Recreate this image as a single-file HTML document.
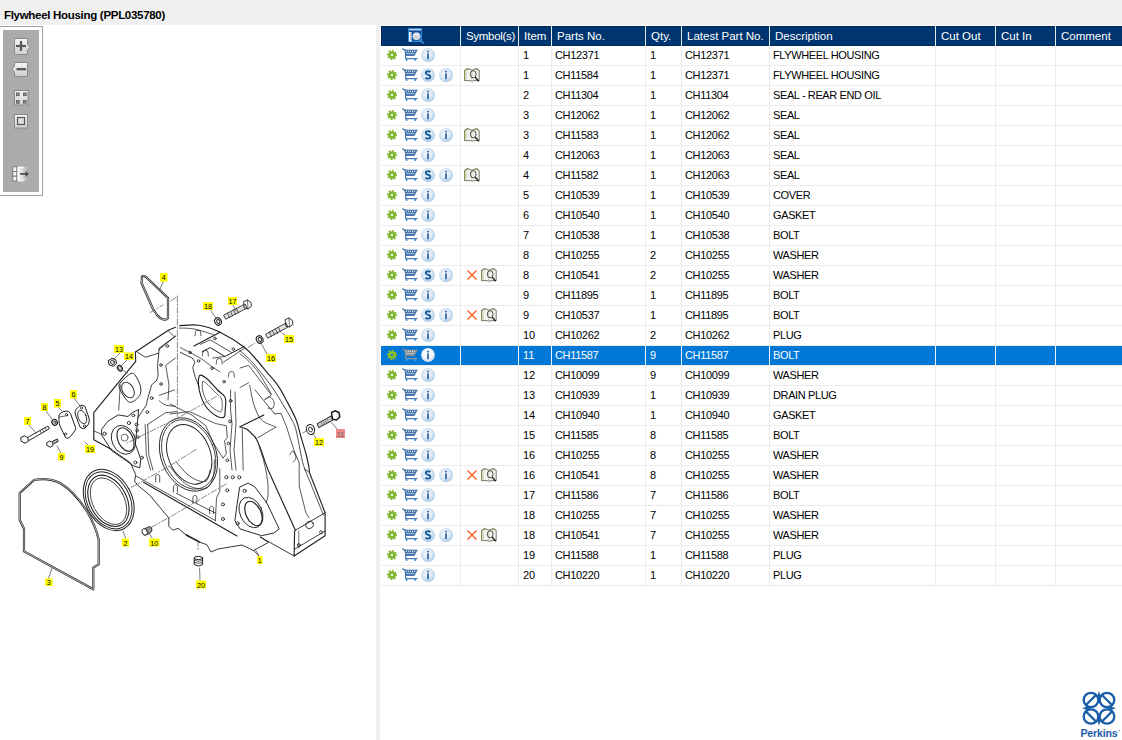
<!DOCTYPE html>
<html><head><meta charset="utf-8">
<style>
*{margin:0;padding:0;box-sizing:border-box}
html,body{width:1122px;height:740px;overflow:hidden;background:#f0f0f0;font-family:"Liberation Sans",sans-serif;position:relative}
.a{position:absolute}
.ic{position:absolute;overflow:visible}
.t{position:absolute;font-size:11px;line-height:20px;white-space:nowrap;color:#000;letter-spacing:-0.1px}
.h{position:absolute;font-size:11.5px;line-height:20px;white-space:nowrap;color:#fff;letter-spacing:0px}
</style></head><body>

<svg width="0" height="0" style="position:absolute">
<defs>
<radialGradient id="gcirc" cx="0.45" cy="0.42" r="0.6">
<stop offset="0" stop-color="#f6f9fc"/><stop offset="0.55" stop-color="#dde9f4"/><stop offset="0.85" stop-color="#b9d3ea"/><stop offset="1" stop-color="#9dc2e2"/>
</radialGradient>
<radialGradient id="gcircs" cx="0.45" cy="0.42" r="0.6">
<stop offset="0" stop-color="#ffffff"/><stop offset="0.6" stop-color="#eef4fa"/><stop offset="0.9" stop-color="#cfe0f0"/><stop offset="1" stop-color="#b8d2ea"/>
</radialGradient>
<symbol id="gear" viewBox="0 0 10 10">
<circle cx="5" cy="5" r="3.6" fill="#7cb42c"/>
<circle cx="5" cy="5" r="4.1" fill="none" stroke="#7cb42c" stroke-width="1.7" stroke-dasharray="1.95,1.27" transform="rotate(-10 5 5)"/>
<circle cx="5" cy="5" r="1.15" fill="#fff"/>
</symbol>
<symbol id="gears" viewBox="0 0 10 10">
<circle cx="5" cy="5" r="3.6" fill="#8ec21e"/>
<circle cx="5" cy="5" r="4.1" fill="none" stroke="#8ec21e" stroke-width="1.7" stroke-dasharray="1.95,1.27" transform="rotate(-10 5 5)"/>
<circle cx="5" cy="5" r="1.15" fill="#0078d7"/>
</symbol>
<symbol id="cart" viewBox="0 0 16 13">
<path fill="none" stroke="#4a77ad" stroke-width="1.3" stroke-linecap="round" d="M0.7,0.8 L2.8,2.3"/>
<path fill="#4a77ad" d="M2.4,1.5 L15.8,1.7 L12.3,7.9 L3.2,7.9 Z"/>
<path fill="#fff" d="M4,2.7h1v1h-1zM6,2.7h1v1h-1zM8,2.7h1v1h-1zM10,2.7h1v1h-1zM12,2.7h1v1h-1zM4.6,5h1v1.1h-1zM6.6,5h1v1.1h-1zM8.6,5h1v1.1h-1zM10.6,5h1v1.1h-1z"/>
<path fill="none" stroke="#4a77ad" stroke-width="1.2" d="M3.6,7.6 V10.6 H15.5"/>
<circle cx="4.6" cy="12" r="1" fill="#3a8ad8"/><circle cx="13.2" cy="12" r="1" fill="#3a8ad8"/>
</symbol>
<symbol id="carts" viewBox="0 0 16 13">
<path fill="none" stroke="#8a9098" stroke-width="1.3" stroke-linecap="round" d="M0.7,0.8 L2.8,2.3"/>
<path fill="#8a9098" d="M2.4,1.5 L15.8,1.7 L12.3,7.9 L3.2,7.9 Z"/>
<path fill="#e8eef4" d="M4,2.7h1v1h-1zM6,2.7h1v1h-1zM8,2.7h1v1h-1zM10,2.7h1v1h-1zM12,2.7h1v1h-1zM4.6,5h1v1.1h-1zM6.6,5h1v1.1h-1zM8.6,5h1v1.1h-1zM10.6,5h1v1.1h-1z"/>
<path fill="none" stroke="#8a9098" stroke-width="1.2" d="M3.6,7.6 V10.6 H15.5"/>
<circle cx="4.6" cy="12" r="1" fill="#3aa0e8"/><circle cx="13.2" cy="12" r="1" fill="#3aa0e8"/>
</symbol>
<symbol id="iic" viewBox="0 0 14 14">
<circle cx="7" cy="7" r="6.9" fill="url(#gcirc)"/>
<rect x="6.1" y="2.8" width="1.8" height="1.6" fill="#3466a6"/>
<rect x="6.1" y="5.4" width="1.8" height="5.8" fill="#3466a6"/>
</symbol>
<symbol id="iics" viewBox="0 0 14 14">
<circle cx="7" cy="7" r="6.9" fill="url(#gcircs)"/>
<rect x="6.1" y="2.8" width="1.8" height="1.6" fill="#3466a6"/>
<rect x="6.1" y="5.4" width="1.8" height="5.8" fill="#3466a6"/>
</symbol>
<symbol id="sic" viewBox="0 0 14 14">
<circle cx="7" cy="7" r="6.9" fill="url(#gcirc)"/>
<path fill="none" stroke="#1a5e9e" stroke-width="1.9" d="M9.4,4.1 Q8.6,3.3 7,3.3 Q4.7,3.3 4.7,5 Q4.7,6.3 7,6.8 Q9.3,7.3 9.3,8.8 Q9.3,10.6 7,10.6 Q5.3,10.6 4.5,9.6"/>
</symbol>
<symbol id="xic" viewBox="0 0 10 10">
<path stroke="#ff5a1a" stroke-width="1.4" d="M0.5,0.5 L9.5,9.5 M9.5,0.5 L0.5,9.5"/>
</symbol>
<symbol id="book" viewBox="0 0 16 14">
<path fill="#f2f2ee" stroke="#5a5a48" stroke-width="0.8" d="M0.6,2.2 L2,2 V1 H5 L8,2.2 L11,1 H13.8 V2 L15.2,2.2 V12.6 H10 Q8,13.8 6,12.6 H0.6 Z"/>
<path fill="none" stroke="#8c8c3c" stroke-width="0.9" d="M0.6,2.2 V12.6 M2.2,1 H5 M11,1 H13.8"/>
<path fill="none" stroke="#b0b0a0" stroke-width="0.6" d="M7.8,2.4 V12.6 M2.2,2.4 V11.6"/>
<ellipse cx="9.2" cy="6.2" rx="2.9" ry="3.6" fill="none" stroke="#2e2e2e" stroke-width="0.85"/>
<path stroke="#222" stroke-width="1.4" d="M11.2,9.2 L14.8,13.2"/>
</symbol>
<symbol id="hdr" viewBox="0 0 17 16">
<rect x="0.5" y="0.5" width="13" height="13" fill="#0b4c94" stroke="#2a8ad8" stroke-width="1"/>
<rect x="1" y="1.2" width="12" height="1.2" fill="#e6eef6"/>
<rect x="1" y="4" width="2.6" height="9.5" fill="#f4f8fc"/>
<path d="M2.3,5h1v0.8h-1zM2.3,7h1v0.8h-1zM2.3,9h1v0.8h-1zM2.3,11h1v0.8h-1z" fill="#2a5a90"/>
<circle cx="8.5" cy="8.3" r="4.5" fill="#2a78c4"/>
<circle cx="8.5" cy="8.3" r="3.8" fill="#d8dce2"/>
<path d="M6.3,6.5 Q8.5,5.2 10.7,6.5" stroke="#fff" stroke-width="1" fill="none"/>
<path d="M6,9.3 H11" stroke="#b8bcc4" stroke-width="0.6"/>
<path stroke="#3a88d0" stroke-width="1.8" d="M11.6,11.6 L15.6,15.4"/>
</symbol>
</defs></svg>

<div class="a" style="left:4px;top:8px;font-size:11.5px;font-weight:bold;line-height:14px;color:#000;white-space:nowrap;letter-spacing:-0.3px">Flywheel Housing (PPL035780)</div>
<div class="a" style="left:0;top:25px;width:376px;height:715px;background:#fff"></div>
<div class="a" style="left:380px;top:25px;width:742px;height:715px;background:#fff"></div>
<div class="a" style="left:0;top:26px;width:43px;height:170px;border:1px solid #a0a0a0;border-left:none;background:#fff"></div>
<div class="a" style="left:3px;top:30px;width:36px;height:162px;background:#ababab"></div>
<svg class="a" style="left:0;top:0" width="45" height="200">
<defs>
<linearGradient id="tbg" x1="0" y1="0" x2="0" y2="1"><stop offset="0" stop-color="#f6f6f6"/><stop offset="1" stop-color="#cfcfcf"/></linearGradient>
</defs>
<g stroke="#8a8a8a" stroke-width="1" fill="url(#tbg)">
<path d="M14.5,38.5 h13 v6 l2.5,2.8 -2.5,2.8 v4.4 h-13z"/>
<path d="M14.5,62.5 h13 v14 h-13 v-4.6 l-2.5,-2.7 2.5,-2.7z"/>
<rect x="14.5" y="90.5" width="13.5" height="14.5"/>
<rect x="14.5" y="114.5" width="13" height="13.5"/>
</g>
<g fill="#5a5a5a">
<rect x="16" y="44.9" width="10" height="2.2"/><rect x="19.9" y="41" width="2.2" height="10"/>
<rect x="16.5" y="68" width="9.5" height="2.4"/>
<g fill="#8a8a8a" stroke="#5a5a5a" stroke-width="0.8"><rect x="16.4" y="92.9" width="2.8" height="2.8"/><rect x="23.4" y="92.9" width="2.8" height="2.8"/>
<rect x="16.4" y="100.4" width="2.8" height="2.8"/><rect x="23.4" y="100.4" width="2.8" height="2.8"/></g>
</g>
<rect x="17.5" y="117.5" width="7" height="7" fill="#dcdcdc" stroke="#555" stroke-width="1.2"/>
<defs><linearGradient id="arg" x1="0" y1="0" x2="1" y2="0"><stop offset="0" stop-color="#fafafa"/><stop offset="0.5" stop-color="#d8d8d8"/><stop offset="1" stop-color="#ababab"/></linearGradient></defs>
<g stroke="#6a6a6a" stroke-width="0.8" fill="#f4f4f4">
<rect x="12.8" y="166.8" width="4" height="4.6"/><rect x="12.8" y="171.4" width="4" height="4.8"/><rect x="12.8" y="176.2" width="4" height="4.8"/>
</g>
<rect x="17.6" y="166.8" width="10.5" height="14.4" fill="url(#arg)"/>
<path d="M18.2,166.8 V181.2 M18.2,167.2 H24 M18.2,180.8 H24" stroke="#fff" stroke-width="0.9"/>
<path d="M20,173.9 H26.2" stroke="#4a4a4a" stroke-width="1.7"/>
<path d="M25.6,170.9 L28.8,173.9 L25.6,176.9 Z" fill="#4a4a4a"/>
</svg>

<svg class="a" style="left:0;top:0" width="376" height="740" viewBox="0 0 376 740">
<g fill="none" stroke="#202020" stroke-width="0.85" stroke-linejoin="round" stroke-linecap="round">
<path d="M135.4,352.0 L168.4,330.3 L175.4,327.3" stroke-width="1.15" stroke="#202020" />
<path d="M136.5,351.6 L145.4,357.3 L158.4,353.2" stroke-width="0.85" stroke="#202020" />
<path d="M158.4,350.0 L175.5,336.2" stroke-width="0.85" stroke="#202020" />
<path d="M168.1,330.5 L174.6,337.0" stroke-width="0.75" stroke="#202020" />
<path d="M179.5,325.7 C182.7,325.6 192.2,324.1 198.9,325.2 C205.7,326.3 212.4,328.5 220.0,332.2 C227.6,335.9 238.3,342.6 244.3,347.2 C250.3,351.8 252.4,355.3 256.2,359.5 C260.0,363.7 263.4,368.1 267.0,372.4 C270.6,376.7 274.6,380.7 277.8,385.4 C281.1,390.1 283.4,394.7 286.5,400.5 C289.6,406.3 293.8,413.9 296.2,420.0 C298.6,426.1 299.4,431.7 301.0,437.0 C302.6,442.3 304.2,447.3 305.5,452.0 C306.8,456.7 307.8,461.6 308.5,465.0 C309.2,468.4 309.3,471.3 309.5,472.6 L325.1,512.7 L325.1,535.7 L294.1,556 L294.6,531" stroke-width="1.15" stroke="#202020" />
<path d="M135.4,352.0 L135.7,361.4 L93.8,412.7 L93.8,439.8 L111.6,449.5" stroke-width="1.15" stroke="#202020" />
<path d="M143.5,482.3 L237.0,536.0" stroke-width="1.15" stroke="#202020" />
<path d="M260.3,537.0 L294.1,556.0" stroke-width="0.90" stroke="#202020" />
<path d="M295.4,530.3 L325.1,512.7" stroke-width="0.90" stroke="#202020" />
<path d="M294.6,549.2 L325.1,531.0" stroke-width="0.85" stroke="#202020" />
<path d="M240.0,426.8 C241.1,427.2 244.5,427.8 246.5,429.0 C248.5,430.2 250.4,432.4 252.0,434.0 C253.6,435.6 254.7,436.0 256.2,438.7 C257.7,441.4 259.6,446.2 261.0,450.0 C262.4,453.8 263.7,458.1 264.9,461.4 C266.1,464.7 267.6,468.6 268.1,470.0 L295.4,530.3" stroke-width="1.15" stroke="#202020" />
<path d="M309.5,472.6 L304.7,468.9 L323.5,515.2" stroke-width="0.75" stroke="#202020" />
<path d="M240.0,426.8 L263.8,414.9" stroke-width="1.15" stroke="#202020" />
<path d="M242.2,429.0 L243.2,470.0" stroke-width="0.75" stroke="#202020" />
<path d="M259.0,446.0 C259.8,448.7 262.6,456.3 264.0,462.0 C265.4,467.7 266.8,474.5 267.5,480.0 C268.2,485.5 268.2,491.2 268.0,495.0 C267.8,498.8 266.3,501.7 266.0,503.0" stroke-width="0.75" stroke="#202020" />
<path d="M257.8,437.6 L275.7,427.3" stroke-width="0.75" stroke="#202020" />
<path d="M240.0,350.8 C241.8,352.4 247.2,356.7 250.8,360.5 C254.4,364.3 258.0,369.0 261.6,373.5 C265.2,378.0 268.8,382.4 272.4,387.6 C276.0,392.8 279.9,399.5 283.2,404.9 C286.4,410.3 289.7,415.6 291.9,420.0 C294.1,424.4 294.6,424.4 296.3,431.1 C298.0,437.8 300.7,453.9 302.2,460.4 C303.7,466.9 304.8,468.5 305.3,470.1" stroke-width="0.80" stroke="#202020" />
<path d="M240.0,354.0 C241.3,355.0 244.5,356.9 247.6,360.0 C250.7,363.1 254.4,366.7 258.4,372.4 C262.4,378.1 269.2,390.4 271.4,394.0" stroke-width="0.75" stroke="#202020" />
<path d="M240.0,368.0 L248.6,365.4 L271.4,395.0 L264.9,399.5" stroke-width="0.75" stroke="#202020" />
<path d="M264.9,399.5 C265.8,399.1 268.5,396.6 270.0,397.0 C271.5,397.4 273.5,400.2 274.0,402.0 C274.5,403.8 274.0,407.0 273.0,408.0 C272.0,409.0 268.8,408.0 268.0,408.0" stroke-width="0.75" stroke="#202020" />
<path d="M274.6,413.8 L281.1,413.3 L286.5,426.8 L294.1,450.6 L299.2,462.8 L299.2,486.0 L305.9,512.7 L308.9,517.6" stroke-width="0.75" stroke="#202020" />
<path d="M240.0,387.6 L248.6,382.7" stroke-width="0.75" stroke="#202020" />
<path d="M249.7,385.4 C250.4,388.6 252.0,399.1 254.0,404.9 C256.0,410.7 258.0,416.4 261.6,420.0 C265.2,423.6 273.4,425.7 275.7,426.8" stroke-width="0.75" stroke="#202020" />
<path d="M255.1,390.0 L274.6,413.8" stroke-width="0.75" stroke="#202020" />
<path d="M289.8,454.9 C290.3,454.2 292.0,450.5 293.0,451.0 C294.0,451.5 296.0,456.2 296.0,458.0 C296.0,459.8 293.5,461.3 293.0,462.0" stroke-width="0.75" stroke="#202020" />
<path d="M179.5,328.1 C181.9,328.2 188.3,327.9 194.0,329.0 C199.7,330.1 210.2,333.7 213.5,334.6" stroke-width="0.75" stroke="#202020" />
<path d="M194.0,346.0 L220.0,332.2" stroke-width="1.15" stroke="#202020" />
<path d="M200.5,344.3 L210.3,339.9 L231.4,352.4" stroke-width="0.75" stroke="#202020" />
<path d="M202.2,351.6 L210.3,347.6 L224.9,356.5 L244.3,346.4" stroke-width="1.00" stroke="#202020" />
<path d="M212.7,358.1 L224.9,356.5" stroke-width="0.75" stroke="#202020" />
<path d="M223.3,362.2 L244.3,348.4" stroke-width="0.75" stroke="#202020" />
<path d="M180.3,347.6 C183.6,349.3 195.0,355.0 200.0,358.0 C205.0,361.0 207.0,363.1 210.3,365.4 C213.6,367.7 218.4,370.9 220.0,372.0" stroke-width="0.75" stroke="#202020" />
<path d="M180.3,352.4 L192.4,358.1 L194.9,362.2 L192.7,367.6 L194.9,376.3 L199.2,387.0" stroke-width="0.85" stroke="#202020" />
<path d="M195.0,335.8 C195.2,335.0 195.2,331.6 196.0,330.8 C196.8,330.0 199.2,330.0 200.0,330.8 C200.8,331.6 200.8,335.0 201.0,335.8" stroke-width="0.75" stroke="#202020" />
<path d="M202.4,356.0 C202.6,355.2 202.6,351.8 203.4,351.0 C204.2,350.2 206.6,350.2 207.4,351.0 C208.2,351.8 208.2,355.2 208.4,356.0" stroke-width="0.75" stroke="#202020" />
<path d="M216.2,364.2 C216.4,363.4 216.4,360.0 217.2,359.2 C218.0,358.4 220.4,358.4 221.2,359.2 C222.0,360.0 222.0,363.4 222.2,364.2" stroke-width="0.75" stroke="#202020" />
<path d="M228.4,377.2 C228.6,376.4 228.6,373.0 229.4,372.2 C230.2,371.4 232.6,371.4 233.4,372.2 C234.2,373.0 234.2,376.4 234.4,377.2" stroke-width="0.75" stroke="#202020" />
<path d="M175.4,336.2 L159.2,348.1 L157.6,365.4 L158.1,376.3 L156.5,380.6 L151.6,384.9 L147.3,400.0 L146.3,405.1 L137.6,418.1" stroke-width="0.85" stroke="#202020" />
<path d="M166.5,364.6 L175.4,358.1" stroke-width="0.75" stroke="#202020" />
<path d="M165.7,365.4 L169.0,385.0 L168.0,400.0" stroke-width="0.75" stroke="#202020" />
<path d="M159.2,395.4 L174.4,390.0" stroke-width="0.75" stroke="#202020" />
<path d="M159.2,400.8 C160.3,401.5 163.0,404.2 165.7,405.1 C168.4,406.0 173.9,406.0 175.5,406.2" stroke-width="0.75" stroke="#202020" />
<path d="M147.3,424.6 L165.7,412.7 L176.5,411.6" stroke-width="0.75" stroke="#202020" />
<path d="M145.2,424.6 L146.3,454.9 L150.6,470.0" stroke-width="0.75" stroke="#202020" />
<path d="M147.7,424.6 L148.8,454.9 L153.0,470.0" stroke-width="0.75" stroke="#202020" />
<path d="M199.2,376.0 C198.1,378.0 198.1,385.0 199.2,390.0 C200.3,395.0 202.8,401.9 205.7,406.2 C208.6,410.5 213.4,414.2 216.5,416.0 C219.6,417.8 222.7,418.0 224.1,417.0 C225.5,416.0 225.0,413.2 225.2,410.0 C225.4,406.8 226.5,400.9 225.2,397.6 C223.9,394.3 220.8,393.3 217.6,390.0 C214.4,386.7 209.1,380.3 206.0,378.0 C202.9,375.7 200.3,374.0 199.2,376.0Z" stroke-width="1.15" stroke="#202020" />
<path d="M202.5,382.0 C202.0,383.5 202.1,388.5 203.0,392.0 C203.9,395.5 205.8,400.0 208.0,403.0 C210.2,406.0 213.8,408.7 216.0,410.0 C218.2,411.3 220.6,412.8 221.5,411.0 C222.4,409.2 222.6,402.2 221.5,399.0 C220.4,395.8 217.6,394.7 215.0,392.0 C212.4,389.3 208.1,384.7 206.0,383.0 C203.9,381.3 203.0,380.5 202.5,382.0Z" stroke-width="0.70" stroke="#202020" />
<path d="M170.0,404.0 L191.6,414.9 L205.7,425.7 L213.3,443.0 L223.0,458.2 L226.3,453.8 L224.6,440.8 L227.3,437.6 L226.3,425.7 L215.4,423.5 L189.5,411.6 L170.0,414.0" stroke-width="0.75" stroke="#202020" />
<path d="M230.6,390.0 L230.6,410.0 L232.0,424.0 L230.0,450.0 L232.0,470.0" stroke-width="0.75" stroke="#202020" />
<path d="M235.0,392.0 L236.0,424.0 L234.0,450.0 L236.0,470.0" stroke-width="0.75" stroke="#202020" />
<path d="M219.8,468.7 L219.8,491.4 L216.5,497.9 L215.4,520.6" stroke-width="0.75" stroke="#202020" />
<ellipse cx="188.5" cy="454.5" rx="27.5" ry="38" transform="rotate(-22 188.5 454.5)" stroke-width="0.85" stroke="#202020"/>
<ellipse cx="188.7" cy="454.4" rx="25.5" ry="36" transform="rotate(-22 188.7 454.4)" stroke-width="0.75" stroke="#202020"/>
<ellipse cx="189.2" cy="454.3" rx="21" ry="31" transform="rotate(-22 189.2 454.3)" stroke-width="0.95" stroke="#202020"/>
<path d="M94.3,431.1 L101.9,434.4" stroke-width="0.75" stroke="#202020" />
<path d="M101.9,428.9 L107.8,421.4 L118.1,414.9 L127.9,416.5 L132.2,412.7 L138.7,409.5 L135.4,444.1 L140.8,459.2 L139.8,467.9 L133.3,465.7 L122.5,458.2 L111.6,450.6 L101.9,435.4Z" stroke-width="0.95" stroke="#202020" />
<ellipse cx="123.5" cy="439.8" rx="11.5" ry="15" transform="rotate(-25 123.5 439.8)" stroke-width="0.85" stroke="#202020"/>
<ellipse cx="125.5" cy="439.5" rx="7.5" ry="12.5" transform="rotate(-25 125.5 439.5)" stroke-width="1.10" stroke="#202020"/>
<circle cx="124.6" cy="437.6" r="3.5" stroke-width="0.65" stroke="#202020"/>
<path d="M120.7,382.4 C122.6,380.0 128.3,374.6 130.8,373.5 C133.3,372.4 134.1,373.8 135.7,376.0 C137.3,378.2 139.8,383.3 140.5,386.5 C141.2,389.7 141.0,392.8 139.7,395.4 C138.3,398.0 134.6,401.1 132.4,401.9 C130.2,402.7 128.9,402.6 126.8,400.3 C124.6,398.0 120.5,391.1 119.5,388.1 C118.5,385.1 118.8,384.8 120.7,382.4Z" stroke-width="0.95" stroke="#202020" />
<ellipse cx="128" cy="390" rx="5.5" ry="8.5" transform="rotate(-30 128 390)" stroke-width="0.90" stroke="#202020"/>
<path d="M120.3,384.9 L118.7,410.0" stroke-width="0.75" stroke="#202020" />
<path d="M111.9,449.7 L130.3,462.7 L135.7,474.6 L134.6,481.1 L137.9,485.4 L149.8,495.2 L168.8,518.0 L168.8,526.2 L172.9,530.3 L178.0,528.3 L186.3,535.0 L199.6,542.1 L206.8,544.7 L211.0,552.0 L218.0,549.0 L242.0,545.0 L253.5,550.5 L268.4,542.4 L260.3,537.0" stroke-width="0.90" stroke="#202020" />
<path d="M253.5,550.5 L259.0,556.0" stroke-width="0.75" stroke="#202020" />
<path d="M186.3,535.0 L199.6,542.1" stroke-width="1.50" stroke="#202020" />
<path d="M176.5,493.5 L215.4,513.0" stroke-width="0.75" stroke="#202020" />
<path d="M136.0,476.0 L215.4,520.6" stroke-width="0.75" stroke="#202020" />
<path d="M155.7,482.0 L155.7,476.0 L157.7,474.0 L159.7,476.0 L159.7,482.0" stroke-width="0.75" stroke="#202020" />
<path d="M173.4,492.2 L173.4,486.2 L175.4,484.2 L177.4,486.2 L177.4,492.2" stroke-width="0.75" stroke="#202020" />
<path d="M192.9,503.0 L192.9,497.0 L194.9,495.0 L196.9,497.0 L196.9,503.0" stroke-width="0.75" stroke="#202020" />
<path d="M209.6,513.8 L209.6,507.8 L211.6,505.8 L213.6,507.8 L213.6,513.8" stroke-width="0.75" stroke="#202020" />
<path d="M170.0,466.5 C171.7,468.6 176.4,475.6 180.0,479.0 C183.6,482.4 187.1,485.5 191.6,487.0 C196.1,488.5 203.2,489.9 206.8,488.1 C210.4,486.3 212.0,480.9 213.3,476.2 C214.6,471.5 214.2,462.7 214.4,460.0" stroke-width="0.75" stroke="#202020" />
<path d="M176.5,462.2 C178.2,464.2 183.4,470.9 187.0,474.0 C190.6,477.1 194.8,479.5 198.1,480.6 C201.4,481.7 204.8,482.4 206.8,480.6 C208.8,478.8 209.5,471.8 210.0,470.0" stroke-width="0.75" stroke="#202020" />
<path d="M240.0,487.0 L248.1,483.0 L254.9,487.0 L267.0,503.2 L279.2,528.9 L273.8,533.0 L261.6,535.7 L240.0,528.9 L234.9,520.6 L237.0,505.0Z" stroke-width="0.95" stroke="#202020" />
<ellipse cx="251" cy="512.5" rx="11" ry="16" transform="rotate(-25 251 512.5)" stroke-width="0.85" stroke="#202020"/>
<ellipse cx="253.5" cy="513.5" rx="7.5" ry="13" transform="rotate(-25 253.5 513.5)" stroke-width="1.20" stroke="#202020"/>
<path d="M298.8,531.0 L298.8,548.0" stroke-width="0.65" stroke="#202020" />
<ellipse cx="309.6" cy="524.9" rx="4" ry="3.6" transform="rotate(-30 309.6 524.9)" stroke-width="0.85" stroke="#202020"/>
<circle cx="214.9" cy="338.4" r="1.3" stroke-width="0.85" stroke="#202020"/>
<circle cx="233.3" cy="349.2" r="1.3" stroke-width="0.85" stroke="#202020"/>
<circle cx="224" cy="381.7" r="1.3" stroke-width="0.85" stroke="#202020"/>
<circle cx="230.6" cy="400.8" r="1.4" stroke-width="0.85" stroke="#202020"/>
<circle cx="230" cy="421.4" r="1.4" stroke-width="0.85" stroke="#202020"/>
<circle cx="228.4" cy="443.5" r="1.4" stroke-width="0.85" stroke="#202020"/>
<circle cx="227.3" cy="460.3" r="1.4" stroke-width="0.85" stroke="#202020"/>
<circle cx="104.6" cy="433.8" r="1.6" stroke-width="0.85" stroke="#202020"/>
<circle cx="128.9" cy="423" r="1.6" stroke-width="0.85" stroke="#202020"/>
<circle cx="133.3" cy="415.4" r="1.4" stroke-width="0.85" stroke="#202020"/>
<circle cx="136.5" cy="424.6" r="1.4" stroke-width="0.85" stroke="#202020"/>
<circle cx="137.1" cy="430.6" r="1.4" stroke-width="0.85" stroke="#202020"/>
<circle cx="137.6" cy="437.1" r="1.4" stroke-width="0.85" stroke="#202020"/>
<circle cx="141.9" cy="457.6" r="1.5" stroke-width="0.85" stroke="#202020"/>
<circle cx="135.4" cy="462.5" r="1.5" stroke-width="0.85" stroke="#202020"/>
<circle cx="147.3" cy="412.2" r="1.4" stroke-width="0.85" stroke="#202020"/>
<circle cx="151.7" cy="398.1" r="1.4" stroke-width="0.85" stroke="#202020"/>
<circle cx="226.3" cy="477.3" r="1.6" stroke-width="0.85" stroke="#202020"/>
<circle cx="232.7" cy="477.3" r="1.6" stroke-width="0.85" stroke="#202020"/>
<circle cx="239.2" cy="477.3" r="1.6" stroke-width="0.85" stroke="#202020"/>
<circle cx="227.3" cy="490.3" r="1.5" stroke-width="0.85" stroke="#202020"/>
<circle cx="223" cy="504.4" r="1.5" stroke-width="0.85" stroke="#202020"/>
<circle cx="223" cy="519" r="1.5" stroke-width="0.85" stroke="#202020"/>
<circle cx="237.6" cy="523.3" r="1.6" stroke-width="0.85" stroke="#202020"/>
<circle cx="244.6" cy="490.8" r="1.6" stroke-width="0.85" stroke="#202020"/>
<circle cx="298.8" cy="545.1" r="1.5" stroke-width="0.85" stroke="#202020"/>
<circle cx="321.1" cy="532.3" r="1.5" stroke-width="0.85" stroke="#202020"/>
<circle cx="167.3" cy="346" r="1.3" stroke-width="0.85" stroke="#202020"/>
<circle cx="190" cy="352.4" r="1.3" stroke-width="0.85" stroke="#202020"/>
<circle cx="198.5" cy="361" r="1.3" stroke-width="0.85" stroke="#202020"/>
<circle cx="211.9" cy="368.3" r="1.3" stroke-width="0.85" stroke="#202020"/>
<circle cx="161" cy="365" r="1.3" stroke-width="0.85" stroke="#202020"/>
<circle cx="161" cy="384" r="1.3" stroke-width="0.85" stroke="#202020"/>
<!-- part 4 gasket -->
<path d="M142,278 C141,276 144,275.5 146,277 L168,298 L168,318 C166,321 161,320 157,315 L153,309 L141.5,283 Z" stroke-width='2.2' stroke="#202020"/>
<path d="M142,278 C141,276 144,275.5 146,277 L168,298 L168,318 C166,321 161,320 157,315 L153,309 L141.5,283 Z" stroke="#fff" stroke-width='0.7'/>
<!-- part 3 gasket -->
<path d="M19.7,493 L19.7,520 L24,528.7 L24,551.4 L93.3,589.3 L93.3,567.6 L98.7,564.4 L98.7,539.5 C96,528 92,520 88,513 C80,500 72,490 60,483 C52,479 44,478 34,480 Z" stroke-width='2.2' stroke="#202020"/>
<path d="M19.7,493 L19.7,520 L24,528.7 L24,551.4 L93.3,589.3 L93.3,567.6 L98.7,564.4 L98.7,539.5 C96,528 92,520 88,513 C80,500 72,490 60,483 C52,479 44,478 34,480 Z" stroke="#fff" stroke-width='0.7'/>
<!-- part 2 seal -->
<ellipse cx="108.7" cy="500" rx="23" ry="32.5" transform="rotate(-28 108.7 500)" stroke-width="1.00"/>
<ellipse cx="108.6" cy="500.3" rx="21" ry="30.3" transform="rotate(-28 108.6 500.3)" stroke-width="0.95"/>
<ellipse cx="108.4" cy="500.8" rx="18.3" ry="27.3" transform="rotate(-28 108.4 500.8)" stroke-width="1.10"/>
<ellipse cx="108.5" cy="501.2" rx="15.8" ry="25" transform="rotate(-28 108.5 501.2)" stroke-width="0.75"/>
<!-- part 5 cover -->
<path d="M59,415.5 Q60,412.5 63,411.8 L66.5,411 Q69,411 70.5,413.5 L75.5,427.5 Q76,430 74,432 L69.5,437.5 Q67.5,439 65.5,437.5 L60,426 Q58.8,423.5 59,420 Z" stroke-width="1.00"/>
<path d="M59.5,417 L68,415.5" stroke-width="0.70"/>
<circle cx="66.5" cy="414.5" r="1.1" stroke-width="0.75"/><circle cx="65.5" cy="434" r="1.1" stroke-width="0.75"/>
<!-- part 6 gasket -->
<path d="M79.5,406 Q82,404 85,406.5 L89,418 Q90,422 88,425 L85,428 Q82,429.5 80,427 L75.5,415 Q74,411.5 76,409.5 Z" stroke-width="1.00"/>
<ellipse cx="82.2" cy="417" rx="4" ry="7" transform="rotate(-22 82.2 417)" stroke-width="0.85"/>
<circle cx="81.5" cy="408" r="1.1" stroke-width="0.75"/><circle cx="84.5" cy="426" r="1.1" stroke-width="0.75"/>
<!-- bolt 7 -->
<path d="M27.5,437.5 L48,426 L49.3,428.8 L29,440.5" stroke-width="0.95"/>
<path d="M40,430.5 L41.2,433.3 M42.5,429 L43.7,431.8 M45,427.6 L46.2,430.4" stroke-width="0.65"/>
<path d="M21,437.5 L24.5,435.8 L28,437.8 L28.3,441.3 L25,443.2 L21.5,441.5 Z" stroke-width="1.00"/>
<!-- washer 8 -->
<ellipse cx="54.6" cy="422.3" rx="2.6" ry="3" transform="rotate(-30 54.6 422.3)" stroke-width="1.20"/>
<ellipse cx="54.8" cy="422.3" rx="1" ry="1.4" transform="rotate(-30 54.8 422.3)" stroke-width="0.75"/>
<!-- bolt 9 -->
<path d="M52.5,441.5 L57.2,439 L58.3,441.3 L53.5,443.8" stroke-width="0.95"/>
<path d="M54,440.7 L55,443 M55.7,439.8 L56.7,442.1" stroke-width="0.60"/>
<path d="M47,442.5 L49.8,441 L52.8,442.6 L53,445.6 L50.2,447.2 L47.3,445.6 Z" stroke-width="1.00"/>
<!-- 13, 14 -->
<path d="M108.5,360.5 L112,358.3 L115.8,359.8 L116.6,363.5 L113.5,366.3 L109.5,365 Z" fill="#e4e4e4" stroke-width="1.00"/>
<ellipse cx="112.5" cy="362.3" rx="1.8" ry="2.2" transform="rotate(-30 112.5 362.3)" stroke-width="0.85"/>
<ellipse cx="119.9" cy="368.2" rx="2.2" ry="3" transform="rotate(-35 119.9 368.2)" fill="#bbb" stroke-width="1.20"/>
<!-- bolt 17 -->
<path d="M224,315 L245,304 L247,308 L226,319 Z" fill="#e0e0e0"/>
<path d="M227.5,313 L229.5,317.5 M230.5,311.5 L232.5,316 M233.5,310 L235.5,314.5 M236.5,308.5 L238.5,313" stroke-width="0.70"/>
<path d="M244,301.5 L247.5,300 L251,302.5 L251.3,306.5 L248,309 L244.5,308 Z" stroke-width="0.90"/><path d="M247.5,300 L248,309" stroke-width="0.65"/>
<ellipse cx="218" cy="321.5" rx="3.2" ry="3.8" transform="rotate(-30 218 321.5)" stroke-width="1.10"/><ellipse cx="218.3" cy="321.5" rx="1.5" ry="2" transform="rotate(-30 218.3 321.5)" stroke-width="0.95"/>
<!-- bolt 15 -->
<path d="M266,334 L286,323 L288,327 L268,338 Z" fill="#e0e0e0"/>
<path d="M269.5,332 L271.5,336.5 M272.5,330.5 L274.5,335 M275.5,329 L277.5,333.5 M278.5,327.5 L280.5,332" stroke-width="0.70"/>
<path d="M285.5,319.5 L289,318 L292.5,320.5 L292.8,324.5 L289.5,327 L286,326 Z" stroke-width="0.90"/><path d="M289,318 L289.5,327" stroke-width="0.65"/>
<ellipse cx="259.7" cy="339.5" rx="3.2" ry="3.8" transform="rotate(-30 259.7 339.5)" stroke-width="1.10"/><ellipse cx="260" cy="339.5" rx="1.5" ry="2" transform="rotate(-30 260 339.5)" stroke-width="0.95"/>
<!-- bolt 11 -->
<path d="M317.5,423.5 L331,416 L333,420 L319,427.5 Z" fill="#c8c8c8" stroke-width="0.95"/>
<path d="M321,421.5 L322.5,425 M323,420.5 L324.5,424 M325,419.5 L326.5,423 M327,418.5 L328.5,422" stroke-width="0.65" stroke="#666"/>
<path d="M331.5,412.5 L335,410.8 L339,412.5 L339.8,417 L336.5,420 L332.5,419.2 Z" stroke-width="1.50" stroke="#1a1a1a"/>
<ellipse cx="310.5" cy="429.5" rx="4" ry="5" transform="rotate(-20 310.5 429.5)" stroke-width="1.10"/>
<ellipse cx="310.5" cy="429.5" rx="1.8" ry="2.6" transform="rotate(-20 310.5 429.5)"/>
<!-- plug 10 -->
<path d="M145,528.6 L149.5,526.5 Q152,527 152,530 Q151.5,532.5 148.5,534 L145,535.2" fill="#9a9a9a" stroke-width="0.90"/>
<ellipse cx="144.7" cy="531.9" rx="2.6" ry="3.4" transform="rotate(-20 144.7 531.9)" fill="#fff" stroke-width="0.90"/>
<!-- plug 20 -->
<path d="M194.2,558 L194.2,564.5 Q198.4,567.5 202.6,564.5 L202.6,558" stroke-width="1.00"/>
<ellipse cx="198.4" cy="558" rx="4.2" ry="1.6" stroke-width="1.00"/>
<path d="M194.2,560.5 Q198.4,562.3 202.6,560.5 M194.2,562.5 Q198.4,564.3 202.6,562.5" stroke-width="0.75"/>
<!-- leaders -->
<g stroke-width="0.70" stroke="#444">
<path d="M163.5,281 L160,289"/>
<path d="M211,311 L216,318 M233,305 L236,311 M282,333 L285,335 M261,343 L267,354"/>
<path d="M331,422 L338,430 M313,434 L316,438"/>
<path d="M120,353 L114,359 M127,360 L121,366"/>
<path d="M74,398 L80,406 M58,407 L62,411 M46,411 L52,419 M29,425 L36,433 M61,453 L57,446 M88,445 L85,442"/>
<path d="M125.5,538 L123,531 M152,538 L149,533 M259,556 L255,549 M200,580 L199.6,568"/>
<path d="M48.5,578.5 L52,568"/>
</g>
<g stroke-width="0.70" stroke="#555" stroke-dasharray="6,2,1.5,2">
<path d="M177.4,296 L177.4,418"/>
<path d="M150,312.6 L163,305 M171,300.7 L176,297.4"/>
<path d="M248,347.6 L255,343 M303,433 L306,431 M122.5,370 L128,373.5"/>
<path d="M216.5,396.5 L177.6,418.1 L127,443"/>
<path d="M196,449.5 L170,465.7 L127.1,489.8 M226.3,483.8 L173.2,515.2 L150,528"/>
<path d="M198,540 L198,550"/>
</g>

</g>
<!-- labels -->
<g fill="#ffff00">
<rect x="160" y="273" width="7.5" height="8.5"/>
<rect x="228" y="297" width="9" height="8"/>
<rect x="203" y="302" width="10" height="8"/>
<rect x="284" y="335" width="10" height="8"/>
<rect x="266" y="354" width="10" height="8"/>
<rect x="114" y="345" width="10" height="8"/>
<rect x="124" y="352.5" width="10" height="7.5"/>
<rect x="70" y="390" width="7" height="8.5"/>
<rect x="54" y="399" width="7" height="8.5"/>
<rect x="41" y="403" width="7" height="8"/>
<rect x="24" y="417" width="7" height="8"/>
<rect x="85" y="445" width="10" height="8"/>
<rect x="58" y="453" width="7" height="7.5"/>
<rect x="314" y="438" width="10" height="8"/>
<rect x="122" y="538.5" width="7" height="8"/>
<rect x="149" y="538.5" width="10.5" height="8"/>
<rect x="257" y="556" width="5.5" height="8"/>
<rect x="196" y="580.5" width="10" height="8"/>
<rect x="45" y="578.5" width="7.5" height="7.5"/>
</g>
<rect x="336" y="429" width="9" height="9" fill="#f08a8a"/>
<g font-family="Liberation Sans" font-size="7.2" fill="#000" text-anchor="middle">
<text x="163.8" y="280">4</text>
<text x="232.5" y="304">17</text>
<text x="208" y="309">18</text>
<text x="289" y="342">15</text>
<text x="271" y="361">16</text>
<text x="119" y="352">13</text>
<text x="129" y="359">14</text>
<text x="73.5" y="397">6</text>
<text x="57.5" y="406">5</text>
<text x="44.5" y="410">8</text>
<text x="27.5" y="424">7</text>
<text x="90" y="452">19</text>
<text x="61.5" y="459.5">9</text>
<text x="319" y="445">12</text>
<text x="125.5" y="545.5">2</text>
<text x="154.2" y="545.5">10</text>
<text x="259.8" y="563">1</text>
<text x="201" y="587.5">20</text>
<text x="48.7" y="585">3</text>
<text x="340.5" y="436.5" fill="#666">11</text>
</g>
</svg>

<svg class="a" style="left:1075px;top:686px" width="47" height="54" viewBox="1075 686 47 54">
<g fill="none" stroke="#1a5ea8" stroke-width="2.3">
<ellipse cx="1091" cy="700" rx="7.3" ry="7.2"/>
<ellipse cx="1107" cy="700" rx="7.3" ry="7.2"/>
<ellipse cx="1091" cy="716.5" rx="7.3" ry="7.2"/>
<ellipse cx="1107" cy="716.5" rx="7.3" ry="7.2"/>
<path d="M1085.5,705.5 L1096.5,694.5 M1101.5,694.5 L1112.5,705.5 M1085.5,711 L1096.5,722 M1101.5,722 L1112.5,711"/>
</g>
<path d="M1099,691 L1100.8,697 1099,701 1097.2,697Z M1099,715.5 L1100.8,719.5 1099,726 1097.2,719.5Z M1082,708.25 L1087,706.6 1090.5,708.25 1087,709.9Z M1116,708.25 L1111,706.6 1107.5,708.25 1111,709.9Z" fill="#1a5ea8"/>
<text x="1080.5" y="737.3" font-family="Liberation Sans" font-weight="bold" font-size="10.6" fill="#1a5ea8" letter-spacing="-0.2">Perkins</text>
<circle cx="1119.5" cy="730.5" r="0.8" fill="#8aa8cc"/>
</svg>

<div class="a" style="left:381px;top:26px;width:741px;height:20px;background:#003670;border:1px solid #00285a;border-right:none"></div>
<div class="a" style="left:460px;top:26px;width:1px;height:20px;background:#e8e8e8"></div>
<div class="a" style="left:518px;top:26px;width:1px;height:20px;background:#e8e8e8"></div>
<div class="a" style="left:551px;top:26px;width:1px;height:20px;background:#e8e8e8"></div>
<div class="a" style="left:645px;top:26px;width:1px;height:20px;background:#e8e8e8"></div>
<div class="a" style="left:681px;top:26px;width:1px;height:20px;background:#e8e8e8"></div>
<div class="a" style="left:769px;top:26px;width:1px;height:20px;background:#e8e8e8"></div>
<div class="a" style="left:935px;top:26px;width:1px;height:20px;background:#e8e8e8"></div>
<div class="a" style="left:995px;top:26px;width:1px;height:20px;background:#e8e8e8"></div>
<div class="a" style="left:1055px;top:26px;width:1px;height:20px;background:#e8e8e8"></div>
<svg class="ic" style="left:408px;top:28px" width="17" height="16"><use href="#hdr"/></svg>
<div class="h" style="left:466px;top:26px;letter-spacing:-0.3px">Symbol(s)</div>
<div class="h" style="left:524px;top:26px">Item</div>
<div class="h" style="left:557px;top:26px">Parts No.</div>
<div class="h" style="left:651px;top:26px">Qty.</div>
<div class="h" style="left:687px;top:26px">Latest Part No.</div>
<div class="h" style="left:775px;top:26px">Description</div>
<div class="h" style="left:941px;top:26px">Cut Out</div>
<div class="h" style="left:1001px;top:26px">Cut In</div>
<div class="h" style="left:1061px;top:26px">Comment</div>
<div class="a" style="left:381px;top:65px;width:741px;height:1px;background:#ebebeb"></div>
<div class="a" style="left:460px;top:46px;width:1px;height:20px;background:#ebebeb"></div>
<div class="a" style="left:518px;top:46px;width:1px;height:20px;background:#ebebeb"></div>
<div class="a" style="left:551px;top:46px;width:1px;height:20px;background:#ebebeb"></div>
<div class="a" style="left:645px;top:46px;width:1px;height:20px;background:#ebebeb"></div>
<div class="a" style="left:681px;top:46px;width:1px;height:20px;background:#ebebeb"></div>
<div class="a" style="left:769px;top:46px;width:1px;height:20px;background:#ebebeb"></div>
<div class="a" style="left:935px;top:46px;width:1px;height:20px;background:#ebebeb"></div>
<div class="a" style="left:995px;top:46px;width:1px;height:20px;background:#ebebeb"></div>
<div class="a" style="left:1055px;top:46px;width:1px;height:20px;background:#ebebeb"></div>
<svg class="ic" style="left:387px;top:50px" width="10" height="10"><use href="#gear"/></svg>
<svg class="ic" style="left:402px;top:48px" width="16" height="13"><use href="#cart"/></svg>
<svg class="ic" style="left:421px;top:48px" width="14" height="14"><use href="#iic"/></svg>
<div class="t" style="left:523px;top:45px;color:#000">1</div>
<div class="t" style="left:555px;top:45px;color:#000;letter-spacing:-0.32px">CH12371</div>
<div class="t" style="left:650px;top:45px;color:#000">1</div>
<div class="t" style="left:685px;top:45px;color:#000;letter-spacing:-0.32px">CH12371</div>
<div class="t" style="left:773px;top:45px;color:#000;letter-spacing:-0.38px">FLYWHEEL HOUSING</div>
<div class="a" style="left:381px;top:85px;width:741px;height:1px;background:#ebebeb"></div>
<div class="a" style="left:460px;top:66px;width:1px;height:20px;background:#ebebeb"></div>
<div class="a" style="left:518px;top:66px;width:1px;height:20px;background:#ebebeb"></div>
<div class="a" style="left:551px;top:66px;width:1px;height:20px;background:#ebebeb"></div>
<div class="a" style="left:645px;top:66px;width:1px;height:20px;background:#ebebeb"></div>
<div class="a" style="left:681px;top:66px;width:1px;height:20px;background:#ebebeb"></div>
<div class="a" style="left:769px;top:66px;width:1px;height:20px;background:#ebebeb"></div>
<div class="a" style="left:935px;top:66px;width:1px;height:20px;background:#ebebeb"></div>
<div class="a" style="left:995px;top:66px;width:1px;height:20px;background:#ebebeb"></div>
<div class="a" style="left:1055px;top:66px;width:1px;height:20px;background:#ebebeb"></div>
<svg class="ic" style="left:387px;top:70px" width="10" height="10"><use href="#gear"/></svg>
<svg class="ic" style="left:402px;top:68px" width="16" height="13"><use href="#cart"/></svg>
<svg class="ic" style="left:421px;top:68px" width="14" height="14"><use href="#sic"/></svg>
<svg class="ic" style="left:439px;top:68px" width="14" height="14"><use href="#iic"/></svg>
<svg class="ic" style="left:464px;top:68px" width="16" height="14"><use href="#book"/></svg>
<div class="t" style="left:523px;top:65px;color:#000">1</div>
<div class="t" style="left:555px;top:65px;color:#000;letter-spacing:-0.32px">CH11584</div>
<div class="t" style="left:650px;top:65px;color:#000">1</div>
<div class="t" style="left:685px;top:65px;color:#000;letter-spacing:-0.32px">CH12371</div>
<div class="t" style="left:773px;top:65px;color:#000;letter-spacing:-0.38px">FLYWHEEL HOUSING</div>
<div class="a" style="left:381px;top:105px;width:741px;height:1px;background:#ebebeb"></div>
<div class="a" style="left:460px;top:86px;width:1px;height:20px;background:#ebebeb"></div>
<div class="a" style="left:518px;top:86px;width:1px;height:20px;background:#ebebeb"></div>
<div class="a" style="left:551px;top:86px;width:1px;height:20px;background:#ebebeb"></div>
<div class="a" style="left:645px;top:86px;width:1px;height:20px;background:#ebebeb"></div>
<div class="a" style="left:681px;top:86px;width:1px;height:20px;background:#ebebeb"></div>
<div class="a" style="left:769px;top:86px;width:1px;height:20px;background:#ebebeb"></div>
<div class="a" style="left:935px;top:86px;width:1px;height:20px;background:#ebebeb"></div>
<div class="a" style="left:995px;top:86px;width:1px;height:20px;background:#ebebeb"></div>
<div class="a" style="left:1055px;top:86px;width:1px;height:20px;background:#ebebeb"></div>
<svg class="ic" style="left:387px;top:90px" width="10" height="10"><use href="#gear"/></svg>
<svg class="ic" style="left:402px;top:88px" width="16" height="13"><use href="#cart"/></svg>
<svg class="ic" style="left:421px;top:88px" width="14" height="14"><use href="#iic"/></svg>
<div class="t" style="left:523px;top:85px;color:#000">2</div>
<div class="t" style="left:555px;top:85px;color:#000;letter-spacing:-0.32px">CH11304</div>
<div class="t" style="left:650px;top:85px;color:#000">1</div>
<div class="t" style="left:685px;top:85px;color:#000;letter-spacing:-0.32px">CH11304</div>
<div class="t" style="left:773px;top:85px;color:#000;letter-spacing:-0.38px">SEAL - REAR END OIL</div>
<div class="a" style="left:381px;top:125px;width:741px;height:1px;background:#ebebeb"></div>
<div class="a" style="left:460px;top:106px;width:1px;height:20px;background:#ebebeb"></div>
<div class="a" style="left:518px;top:106px;width:1px;height:20px;background:#ebebeb"></div>
<div class="a" style="left:551px;top:106px;width:1px;height:20px;background:#ebebeb"></div>
<div class="a" style="left:645px;top:106px;width:1px;height:20px;background:#ebebeb"></div>
<div class="a" style="left:681px;top:106px;width:1px;height:20px;background:#ebebeb"></div>
<div class="a" style="left:769px;top:106px;width:1px;height:20px;background:#ebebeb"></div>
<div class="a" style="left:935px;top:106px;width:1px;height:20px;background:#ebebeb"></div>
<div class="a" style="left:995px;top:106px;width:1px;height:20px;background:#ebebeb"></div>
<div class="a" style="left:1055px;top:106px;width:1px;height:20px;background:#ebebeb"></div>
<svg class="ic" style="left:387px;top:110px" width="10" height="10"><use href="#gear"/></svg>
<svg class="ic" style="left:402px;top:108px" width="16" height="13"><use href="#cart"/></svg>
<svg class="ic" style="left:421px;top:108px" width="14" height="14"><use href="#iic"/></svg>
<div class="t" style="left:523px;top:105px;color:#000">3</div>
<div class="t" style="left:555px;top:105px;color:#000;letter-spacing:-0.32px">CH12062</div>
<div class="t" style="left:650px;top:105px;color:#000">1</div>
<div class="t" style="left:685px;top:105px;color:#000;letter-spacing:-0.32px">CH12062</div>
<div class="t" style="left:773px;top:105px;color:#000;letter-spacing:-0.38px">SEAL</div>
<div class="a" style="left:381px;top:145px;width:741px;height:1px;background:#ebebeb"></div>
<div class="a" style="left:460px;top:126px;width:1px;height:20px;background:#ebebeb"></div>
<div class="a" style="left:518px;top:126px;width:1px;height:20px;background:#ebebeb"></div>
<div class="a" style="left:551px;top:126px;width:1px;height:20px;background:#ebebeb"></div>
<div class="a" style="left:645px;top:126px;width:1px;height:20px;background:#ebebeb"></div>
<div class="a" style="left:681px;top:126px;width:1px;height:20px;background:#ebebeb"></div>
<div class="a" style="left:769px;top:126px;width:1px;height:20px;background:#ebebeb"></div>
<div class="a" style="left:935px;top:126px;width:1px;height:20px;background:#ebebeb"></div>
<div class="a" style="left:995px;top:126px;width:1px;height:20px;background:#ebebeb"></div>
<div class="a" style="left:1055px;top:126px;width:1px;height:20px;background:#ebebeb"></div>
<svg class="ic" style="left:387px;top:130px" width="10" height="10"><use href="#gear"/></svg>
<svg class="ic" style="left:402px;top:128px" width="16" height="13"><use href="#cart"/></svg>
<svg class="ic" style="left:421px;top:128px" width="14" height="14"><use href="#sic"/></svg>
<svg class="ic" style="left:439px;top:128px" width="14" height="14"><use href="#iic"/></svg>
<svg class="ic" style="left:464px;top:128px" width="16" height="14"><use href="#book"/></svg>
<div class="t" style="left:523px;top:125px;color:#000">3</div>
<div class="t" style="left:555px;top:125px;color:#000;letter-spacing:-0.32px">CH11583</div>
<div class="t" style="left:650px;top:125px;color:#000">1</div>
<div class="t" style="left:685px;top:125px;color:#000;letter-spacing:-0.32px">CH12062</div>
<div class="t" style="left:773px;top:125px;color:#000;letter-spacing:-0.38px">SEAL</div>
<div class="a" style="left:381px;top:165px;width:741px;height:1px;background:#ebebeb"></div>
<div class="a" style="left:460px;top:146px;width:1px;height:20px;background:#ebebeb"></div>
<div class="a" style="left:518px;top:146px;width:1px;height:20px;background:#ebebeb"></div>
<div class="a" style="left:551px;top:146px;width:1px;height:20px;background:#ebebeb"></div>
<div class="a" style="left:645px;top:146px;width:1px;height:20px;background:#ebebeb"></div>
<div class="a" style="left:681px;top:146px;width:1px;height:20px;background:#ebebeb"></div>
<div class="a" style="left:769px;top:146px;width:1px;height:20px;background:#ebebeb"></div>
<div class="a" style="left:935px;top:146px;width:1px;height:20px;background:#ebebeb"></div>
<div class="a" style="left:995px;top:146px;width:1px;height:20px;background:#ebebeb"></div>
<div class="a" style="left:1055px;top:146px;width:1px;height:20px;background:#ebebeb"></div>
<svg class="ic" style="left:387px;top:150px" width="10" height="10"><use href="#gear"/></svg>
<svg class="ic" style="left:402px;top:148px" width="16" height="13"><use href="#cart"/></svg>
<svg class="ic" style="left:421px;top:148px" width="14" height="14"><use href="#iic"/></svg>
<div class="t" style="left:523px;top:145px;color:#000">4</div>
<div class="t" style="left:555px;top:145px;color:#000;letter-spacing:-0.32px">CH12063</div>
<div class="t" style="left:650px;top:145px;color:#000">1</div>
<div class="t" style="left:685px;top:145px;color:#000;letter-spacing:-0.32px">CH12063</div>
<div class="t" style="left:773px;top:145px;color:#000;letter-spacing:-0.38px">SEAL</div>
<div class="a" style="left:381px;top:185px;width:741px;height:1px;background:#ebebeb"></div>
<div class="a" style="left:460px;top:166px;width:1px;height:20px;background:#ebebeb"></div>
<div class="a" style="left:518px;top:166px;width:1px;height:20px;background:#ebebeb"></div>
<div class="a" style="left:551px;top:166px;width:1px;height:20px;background:#ebebeb"></div>
<div class="a" style="left:645px;top:166px;width:1px;height:20px;background:#ebebeb"></div>
<div class="a" style="left:681px;top:166px;width:1px;height:20px;background:#ebebeb"></div>
<div class="a" style="left:769px;top:166px;width:1px;height:20px;background:#ebebeb"></div>
<div class="a" style="left:935px;top:166px;width:1px;height:20px;background:#ebebeb"></div>
<div class="a" style="left:995px;top:166px;width:1px;height:20px;background:#ebebeb"></div>
<div class="a" style="left:1055px;top:166px;width:1px;height:20px;background:#ebebeb"></div>
<svg class="ic" style="left:387px;top:170px" width="10" height="10"><use href="#gear"/></svg>
<svg class="ic" style="left:402px;top:168px" width="16" height="13"><use href="#cart"/></svg>
<svg class="ic" style="left:421px;top:168px" width="14" height="14"><use href="#sic"/></svg>
<svg class="ic" style="left:439px;top:168px" width="14" height="14"><use href="#iic"/></svg>
<svg class="ic" style="left:464px;top:168px" width="16" height="14"><use href="#book"/></svg>
<div class="t" style="left:523px;top:165px;color:#000">4</div>
<div class="t" style="left:555px;top:165px;color:#000;letter-spacing:-0.32px">CH11582</div>
<div class="t" style="left:650px;top:165px;color:#000">1</div>
<div class="t" style="left:685px;top:165px;color:#000;letter-spacing:-0.32px">CH12063</div>
<div class="t" style="left:773px;top:165px;color:#000;letter-spacing:-0.38px">SEAL</div>
<div class="a" style="left:381px;top:205px;width:741px;height:1px;background:#ebebeb"></div>
<div class="a" style="left:460px;top:186px;width:1px;height:20px;background:#ebebeb"></div>
<div class="a" style="left:518px;top:186px;width:1px;height:20px;background:#ebebeb"></div>
<div class="a" style="left:551px;top:186px;width:1px;height:20px;background:#ebebeb"></div>
<div class="a" style="left:645px;top:186px;width:1px;height:20px;background:#ebebeb"></div>
<div class="a" style="left:681px;top:186px;width:1px;height:20px;background:#ebebeb"></div>
<div class="a" style="left:769px;top:186px;width:1px;height:20px;background:#ebebeb"></div>
<div class="a" style="left:935px;top:186px;width:1px;height:20px;background:#ebebeb"></div>
<div class="a" style="left:995px;top:186px;width:1px;height:20px;background:#ebebeb"></div>
<div class="a" style="left:1055px;top:186px;width:1px;height:20px;background:#ebebeb"></div>
<svg class="ic" style="left:387px;top:190px" width="10" height="10"><use href="#gear"/></svg>
<svg class="ic" style="left:402px;top:188px" width="16" height="13"><use href="#cart"/></svg>
<svg class="ic" style="left:421px;top:188px" width="14" height="14"><use href="#iic"/></svg>
<div class="t" style="left:523px;top:185px;color:#000">5</div>
<div class="t" style="left:555px;top:185px;color:#000;letter-spacing:-0.32px">CH10539</div>
<div class="t" style="left:650px;top:185px;color:#000">1</div>
<div class="t" style="left:685px;top:185px;color:#000;letter-spacing:-0.32px">CH10539</div>
<div class="t" style="left:773px;top:185px;color:#000;letter-spacing:-0.38px">COVER</div>
<div class="a" style="left:381px;top:225px;width:741px;height:1px;background:#ebebeb"></div>
<div class="a" style="left:460px;top:206px;width:1px;height:20px;background:#ebebeb"></div>
<div class="a" style="left:518px;top:206px;width:1px;height:20px;background:#ebebeb"></div>
<div class="a" style="left:551px;top:206px;width:1px;height:20px;background:#ebebeb"></div>
<div class="a" style="left:645px;top:206px;width:1px;height:20px;background:#ebebeb"></div>
<div class="a" style="left:681px;top:206px;width:1px;height:20px;background:#ebebeb"></div>
<div class="a" style="left:769px;top:206px;width:1px;height:20px;background:#ebebeb"></div>
<div class="a" style="left:935px;top:206px;width:1px;height:20px;background:#ebebeb"></div>
<div class="a" style="left:995px;top:206px;width:1px;height:20px;background:#ebebeb"></div>
<div class="a" style="left:1055px;top:206px;width:1px;height:20px;background:#ebebeb"></div>
<svg class="ic" style="left:387px;top:210px" width="10" height="10"><use href="#gear"/></svg>
<svg class="ic" style="left:402px;top:208px" width="16" height="13"><use href="#cart"/></svg>
<svg class="ic" style="left:421px;top:208px" width="14" height="14"><use href="#iic"/></svg>
<div class="t" style="left:523px;top:205px;color:#000">6</div>
<div class="t" style="left:555px;top:205px;color:#000;letter-spacing:-0.32px">CH10540</div>
<div class="t" style="left:650px;top:205px;color:#000">1</div>
<div class="t" style="left:685px;top:205px;color:#000;letter-spacing:-0.32px">CH10540</div>
<div class="t" style="left:773px;top:205px;color:#000;letter-spacing:-0.38px">GASKET</div>
<div class="a" style="left:381px;top:245px;width:741px;height:1px;background:#ebebeb"></div>
<div class="a" style="left:460px;top:226px;width:1px;height:20px;background:#ebebeb"></div>
<div class="a" style="left:518px;top:226px;width:1px;height:20px;background:#ebebeb"></div>
<div class="a" style="left:551px;top:226px;width:1px;height:20px;background:#ebebeb"></div>
<div class="a" style="left:645px;top:226px;width:1px;height:20px;background:#ebebeb"></div>
<div class="a" style="left:681px;top:226px;width:1px;height:20px;background:#ebebeb"></div>
<div class="a" style="left:769px;top:226px;width:1px;height:20px;background:#ebebeb"></div>
<div class="a" style="left:935px;top:226px;width:1px;height:20px;background:#ebebeb"></div>
<div class="a" style="left:995px;top:226px;width:1px;height:20px;background:#ebebeb"></div>
<div class="a" style="left:1055px;top:226px;width:1px;height:20px;background:#ebebeb"></div>
<svg class="ic" style="left:387px;top:230px" width="10" height="10"><use href="#gear"/></svg>
<svg class="ic" style="left:402px;top:228px" width="16" height="13"><use href="#cart"/></svg>
<svg class="ic" style="left:421px;top:228px" width="14" height="14"><use href="#iic"/></svg>
<div class="t" style="left:523px;top:225px;color:#000">7</div>
<div class="t" style="left:555px;top:225px;color:#000;letter-spacing:-0.32px">CH10538</div>
<div class="t" style="left:650px;top:225px;color:#000">1</div>
<div class="t" style="left:685px;top:225px;color:#000;letter-spacing:-0.32px">CH10538</div>
<div class="t" style="left:773px;top:225px;color:#000;letter-spacing:-0.38px">BOLT</div>
<div class="a" style="left:381px;top:265px;width:741px;height:1px;background:#ebebeb"></div>
<div class="a" style="left:460px;top:246px;width:1px;height:20px;background:#ebebeb"></div>
<div class="a" style="left:518px;top:246px;width:1px;height:20px;background:#ebebeb"></div>
<div class="a" style="left:551px;top:246px;width:1px;height:20px;background:#ebebeb"></div>
<div class="a" style="left:645px;top:246px;width:1px;height:20px;background:#ebebeb"></div>
<div class="a" style="left:681px;top:246px;width:1px;height:20px;background:#ebebeb"></div>
<div class="a" style="left:769px;top:246px;width:1px;height:20px;background:#ebebeb"></div>
<div class="a" style="left:935px;top:246px;width:1px;height:20px;background:#ebebeb"></div>
<div class="a" style="left:995px;top:246px;width:1px;height:20px;background:#ebebeb"></div>
<div class="a" style="left:1055px;top:246px;width:1px;height:20px;background:#ebebeb"></div>
<svg class="ic" style="left:387px;top:250px" width="10" height="10"><use href="#gear"/></svg>
<svg class="ic" style="left:402px;top:248px" width="16" height="13"><use href="#cart"/></svg>
<svg class="ic" style="left:421px;top:248px" width="14" height="14"><use href="#iic"/></svg>
<div class="t" style="left:523px;top:245px;color:#000">8</div>
<div class="t" style="left:555px;top:245px;color:#000;letter-spacing:-0.32px">CH10255</div>
<div class="t" style="left:650px;top:245px;color:#000">2</div>
<div class="t" style="left:685px;top:245px;color:#000;letter-spacing:-0.32px">CH10255</div>
<div class="t" style="left:773px;top:245px;color:#000;letter-spacing:-0.38px">WASHER</div>
<div class="a" style="left:381px;top:285px;width:741px;height:1px;background:#ebebeb"></div>
<div class="a" style="left:460px;top:266px;width:1px;height:20px;background:#ebebeb"></div>
<div class="a" style="left:518px;top:266px;width:1px;height:20px;background:#ebebeb"></div>
<div class="a" style="left:551px;top:266px;width:1px;height:20px;background:#ebebeb"></div>
<div class="a" style="left:645px;top:266px;width:1px;height:20px;background:#ebebeb"></div>
<div class="a" style="left:681px;top:266px;width:1px;height:20px;background:#ebebeb"></div>
<div class="a" style="left:769px;top:266px;width:1px;height:20px;background:#ebebeb"></div>
<div class="a" style="left:935px;top:266px;width:1px;height:20px;background:#ebebeb"></div>
<div class="a" style="left:995px;top:266px;width:1px;height:20px;background:#ebebeb"></div>
<div class="a" style="left:1055px;top:266px;width:1px;height:20px;background:#ebebeb"></div>
<svg class="ic" style="left:387px;top:270px" width="10" height="10"><use href="#gear"/></svg>
<svg class="ic" style="left:402px;top:268px" width="16" height="13"><use href="#cart"/></svg>
<svg class="ic" style="left:421px;top:268px" width="14" height="14"><use href="#sic"/></svg>
<svg class="ic" style="left:439px;top:268px" width="14" height="14"><use href="#iic"/></svg>
<svg class="ic" style="left:467px;top:270px" width="10" height="10"><use href="#xic"/></svg>
<svg class="ic" style="left:481px;top:268px" width="16" height="14"><use href="#book"/></svg>
<div class="t" style="left:523px;top:265px;color:#000">8</div>
<div class="t" style="left:555px;top:265px;color:#000;letter-spacing:-0.32px">CH10541</div>
<div class="t" style="left:650px;top:265px;color:#000">2</div>
<div class="t" style="left:685px;top:265px;color:#000;letter-spacing:-0.32px">CH10255</div>
<div class="t" style="left:773px;top:265px;color:#000;letter-spacing:-0.38px">WASHER</div>
<div class="a" style="left:381px;top:305px;width:741px;height:1px;background:#ebebeb"></div>
<div class="a" style="left:460px;top:286px;width:1px;height:20px;background:#ebebeb"></div>
<div class="a" style="left:518px;top:286px;width:1px;height:20px;background:#ebebeb"></div>
<div class="a" style="left:551px;top:286px;width:1px;height:20px;background:#ebebeb"></div>
<div class="a" style="left:645px;top:286px;width:1px;height:20px;background:#ebebeb"></div>
<div class="a" style="left:681px;top:286px;width:1px;height:20px;background:#ebebeb"></div>
<div class="a" style="left:769px;top:286px;width:1px;height:20px;background:#ebebeb"></div>
<div class="a" style="left:935px;top:286px;width:1px;height:20px;background:#ebebeb"></div>
<div class="a" style="left:995px;top:286px;width:1px;height:20px;background:#ebebeb"></div>
<div class="a" style="left:1055px;top:286px;width:1px;height:20px;background:#ebebeb"></div>
<svg class="ic" style="left:387px;top:290px" width="10" height="10"><use href="#gear"/></svg>
<svg class="ic" style="left:402px;top:288px" width="16" height="13"><use href="#cart"/></svg>
<svg class="ic" style="left:421px;top:288px" width="14" height="14"><use href="#iic"/></svg>
<div class="t" style="left:523px;top:285px;color:#000">9</div>
<div class="t" style="left:555px;top:285px;color:#000;letter-spacing:-0.32px">CH11895</div>
<div class="t" style="left:650px;top:285px;color:#000">1</div>
<div class="t" style="left:685px;top:285px;color:#000;letter-spacing:-0.32px">CH11895</div>
<div class="t" style="left:773px;top:285px;color:#000;letter-spacing:-0.38px">BOLT</div>
<div class="a" style="left:381px;top:325px;width:741px;height:1px;background:#ebebeb"></div>
<div class="a" style="left:460px;top:306px;width:1px;height:20px;background:#ebebeb"></div>
<div class="a" style="left:518px;top:306px;width:1px;height:20px;background:#ebebeb"></div>
<div class="a" style="left:551px;top:306px;width:1px;height:20px;background:#ebebeb"></div>
<div class="a" style="left:645px;top:306px;width:1px;height:20px;background:#ebebeb"></div>
<div class="a" style="left:681px;top:306px;width:1px;height:20px;background:#ebebeb"></div>
<div class="a" style="left:769px;top:306px;width:1px;height:20px;background:#ebebeb"></div>
<div class="a" style="left:935px;top:306px;width:1px;height:20px;background:#ebebeb"></div>
<div class="a" style="left:995px;top:306px;width:1px;height:20px;background:#ebebeb"></div>
<div class="a" style="left:1055px;top:306px;width:1px;height:20px;background:#ebebeb"></div>
<svg class="ic" style="left:387px;top:310px" width="10" height="10"><use href="#gear"/></svg>
<svg class="ic" style="left:402px;top:308px" width="16" height="13"><use href="#cart"/></svg>
<svg class="ic" style="left:421px;top:308px" width="14" height="14"><use href="#sic"/></svg>
<svg class="ic" style="left:439px;top:308px" width="14" height="14"><use href="#iic"/></svg>
<svg class="ic" style="left:467px;top:310px" width="10" height="10"><use href="#xic"/></svg>
<svg class="ic" style="left:481px;top:308px" width="16" height="14"><use href="#book"/></svg>
<div class="t" style="left:523px;top:305px;color:#000">9</div>
<div class="t" style="left:555px;top:305px;color:#000;letter-spacing:-0.32px">CH10537</div>
<div class="t" style="left:650px;top:305px;color:#000">1</div>
<div class="t" style="left:685px;top:305px;color:#000;letter-spacing:-0.32px">CH11895</div>
<div class="t" style="left:773px;top:305px;color:#000;letter-spacing:-0.38px">BOLT</div>
<div class="a" style="left:381px;top:345px;width:741px;height:1px;background:#ebebeb"></div>
<div class="a" style="left:460px;top:326px;width:1px;height:20px;background:#ebebeb"></div>
<div class="a" style="left:518px;top:326px;width:1px;height:20px;background:#ebebeb"></div>
<div class="a" style="left:551px;top:326px;width:1px;height:20px;background:#ebebeb"></div>
<div class="a" style="left:645px;top:326px;width:1px;height:20px;background:#ebebeb"></div>
<div class="a" style="left:681px;top:326px;width:1px;height:20px;background:#ebebeb"></div>
<div class="a" style="left:769px;top:326px;width:1px;height:20px;background:#ebebeb"></div>
<div class="a" style="left:935px;top:326px;width:1px;height:20px;background:#ebebeb"></div>
<div class="a" style="left:995px;top:326px;width:1px;height:20px;background:#ebebeb"></div>
<div class="a" style="left:1055px;top:326px;width:1px;height:20px;background:#ebebeb"></div>
<svg class="ic" style="left:387px;top:330px" width="10" height="10"><use href="#gear"/></svg>
<svg class="ic" style="left:402px;top:328px" width="16" height="13"><use href="#cart"/></svg>
<svg class="ic" style="left:421px;top:328px" width="14" height="14"><use href="#iic"/></svg>
<div class="t" style="left:523px;top:325px;color:#000">10</div>
<div class="t" style="left:555px;top:325px;color:#000;letter-spacing:-0.32px">CH10262</div>
<div class="t" style="left:650px;top:325px;color:#000">2</div>
<div class="t" style="left:685px;top:325px;color:#000;letter-spacing:-0.32px">CH10262</div>
<div class="t" style="left:773px;top:325px;color:#000;letter-spacing:-0.38px">PLUG</div>
<div class="a" style="left:381px;top:346px;width:741px;height:19px;background:#0078d7"></div>
<div class="a" style="left:381px;top:365px;width:741px;height:1px;background:#ebebeb"></div>
<div class="a" style="left:460px;top:346px;width:1px;height:20px;background:#eef3f8"></div>
<div class="a" style="left:518px;top:346px;width:1px;height:20px;background:#eef3f8"></div>
<div class="a" style="left:551px;top:346px;width:1px;height:20px;background:#eef3f8"></div>
<div class="a" style="left:645px;top:346px;width:1px;height:20px;background:#eef3f8"></div>
<div class="a" style="left:681px;top:346px;width:1px;height:20px;background:#eef3f8"></div>
<div class="a" style="left:769px;top:346px;width:1px;height:20px;background:#eef3f8"></div>
<div class="a" style="left:935px;top:346px;width:1px;height:20px;background:#eef3f8"></div>
<div class="a" style="left:995px;top:346px;width:1px;height:20px;background:#eef3f8"></div>
<div class="a" style="left:1055px;top:346px;width:1px;height:20px;background:#eef3f8"></div>
<svg class="ic" style="left:387px;top:350px" width="10" height="10"><use href="#gears"/></svg>
<svg class="ic" style="left:402px;top:348px" width="16" height="13"><use href="#carts"/></svg>
<svg class="ic" style="left:421px;top:348px" width="14" height="14"><use href="#iics"/></svg>
<div class="t" style="left:523px;top:345px;color:#fff">11</div>
<div class="t" style="left:555px;top:345px;color:#fff;letter-spacing:-0.32px">CH11587</div>
<div class="t" style="left:650px;top:345px;color:#fff">9</div>
<div class="t" style="left:685px;top:345px;color:#fff;letter-spacing:-0.32px">CH11587</div>
<div class="t" style="left:773px;top:345px;color:#fff;letter-spacing:-0.38px">BOLT</div>
<div class="a" style="left:381px;top:385px;width:741px;height:1px;background:#ebebeb"></div>
<div class="a" style="left:460px;top:366px;width:1px;height:20px;background:#ebebeb"></div>
<div class="a" style="left:518px;top:366px;width:1px;height:20px;background:#ebebeb"></div>
<div class="a" style="left:551px;top:366px;width:1px;height:20px;background:#ebebeb"></div>
<div class="a" style="left:645px;top:366px;width:1px;height:20px;background:#ebebeb"></div>
<div class="a" style="left:681px;top:366px;width:1px;height:20px;background:#ebebeb"></div>
<div class="a" style="left:769px;top:366px;width:1px;height:20px;background:#ebebeb"></div>
<div class="a" style="left:935px;top:366px;width:1px;height:20px;background:#ebebeb"></div>
<div class="a" style="left:995px;top:366px;width:1px;height:20px;background:#ebebeb"></div>
<div class="a" style="left:1055px;top:366px;width:1px;height:20px;background:#ebebeb"></div>
<svg class="ic" style="left:387px;top:370px" width="10" height="10"><use href="#gear"/></svg>
<svg class="ic" style="left:402px;top:368px" width="16" height="13"><use href="#cart"/></svg>
<svg class="ic" style="left:421px;top:368px" width="14" height="14"><use href="#iic"/></svg>
<div class="t" style="left:523px;top:365px;color:#000">12</div>
<div class="t" style="left:555px;top:365px;color:#000;letter-spacing:-0.32px">CH10099</div>
<div class="t" style="left:650px;top:365px;color:#000">9</div>
<div class="t" style="left:685px;top:365px;color:#000;letter-spacing:-0.32px">CH10099</div>
<div class="t" style="left:773px;top:365px;color:#000;letter-spacing:-0.38px">WASHER</div>
<div class="a" style="left:381px;top:405px;width:741px;height:1px;background:#ebebeb"></div>
<div class="a" style="left:460px;top:386px;width:1px;height:20px;background:#ebebeb"></div>
<div class="a" style="left:518px;top:386px;width:1px;height:20px;background:#ebebeb"></div>
<div class="a" style="left:551px;top:386px;width:1px;height:20px;background:#ebebeb"></div>
<div class="a" style="left:645px;top:386px;width:1px;height:20px;background:#ebebeb"></div>
<div class="a" style="left:681px;top:386px;width:1px;height:20px;background:#ebebeb"></div>
<div class="a" style="left:769px;top:386px;width:1px;height:20px;background:#ebebeb"></div>
<div class="a" style="left:935px;top:386px;width:1px;height:20px;background:#ebebeb"></div>
<div class="a" style="left:995px;top:386px;width:1px;height:20px;background:#ebebeb"></div>
<div class="a" style="left:1055px;top:386px;width:1px;height:20px;background:#ebebeb"></div>
<svg class="ic" style="left:387px;top:390px" width="10" height="10"><use href="#gear"/></svg>
<svg class="ic" style="left:402px;top:388px" width="16" height="13"><use href="#cart"/></svg>
<svg class="ic" style="left:421px;top:388px" width="14" height="14"><use href="#iic"/></svg>
<div class="t" style="left:523px;top:385px;color:#000">13</div>
<div class="t" style="left:555px;top:385px;color:#000;letter-spacing:-0.32px">CH10939</div>
<div class="t" style="left:650px;top:385px;color:#000">1</div>
<div class="t" style="left:685px;top:385px;color:#000;letter-spacing:-0.32px">CH10939</div>
<div class="t" style="left:773px;top:385px;color:#000;letter-spacing:-0.38px">DRAIN PLUG</div>
<div class="a" style="left:381px;top:425px;width:741px;height:1px;background:#ebebeb"></div>
<div class="a" style="left:460px;top:406px;width:1px;height:20px;background:#ebebeb"></div>
<div class="a" style="left:518px;top:406px;width:1px;height:20px;background:#ebebeb"></div>
<div class="a" style="left:551px;top:406px;width:1px;height:20px;background:#ebebeb"></div>
<div class="a" style="left:645px;top:406px;width:1px;height:20px;background:#ebebeb"></div>
<div class="a" style="left:681px;top:406px;width:1px;height:20px;background:#ebebeb"></div>
<div class="a" style="left:769px;top:406px;width:1px;height:20px;background:#ebebeb"></div>
<div class="a" style="left:935px;top:406px;width:1px;height:20px;background:#ebebeb"></div>
<div class="a" style="left:995px;top:406px;width:1px;height:20px;background:#ebebeb"></div>
<div class="a" style="left:1055px;top:406px;width:1px;height:20px;background:#ebebeb"></div>
<svg class="ic" style="left:387px;top:410px" width="10" height="10"><use href="#gear"/></svg>
<svg class="ic" style="left:402px;top:408px" width="16" height="13"><use href="#cart"/></svg>
<svg class="ic" style="left:421px;top:408px" width="14" height="14"><use href="#iic"/></svg>
<div class="t" style="left:523px;top:405px;color:#000">14</div>
<div class="t" style="left:555px;top:405px;color:#000;letter-spacing:-0.32px">CH10940</div>
<div class="t" style="left:650px;top:405px;color:#000">1</div>
<div class="t" style="left:685px;top:405px;color:#000;letter-spacing:-0.32px">CH10940</div>
<div class="t" style="left:773px;top:405px;color:#000;letter-spacing:-0.38px">GASKET</div>
<div class="a" style="left:381px;top:445px;width:741px;height:1px;background:#ebebeb"></div>
<div class="a" style="left:460px;top:426px;width:1px;height:20px;background:#ebebeb"></div>
<div class="a" style="left:518px;top:426px;width:1px;height:20px;background:#ebebeb"></div>
<div class="a" style="left:551px;top:426px;width:1px;height:20px;background:#ebebeb"></div>
<div class="a" style="left:645px;top:426px;width:1px;height:20px;background:#ebebeb"></div>
<div class="a" style="left:681px;top:426px;width:1px;height:20px;background:#ebebeb"></div>
<div class="a" style="left:769px;top:426px;width:1px;height:20px;background:#ebebeb"></div>
<div class="a" style="left:935px;top:426px;width:1px;height:20px;background:#ebebeb"></div>
<div class="a" style="left:995px;top:426px;width:1px;height:20px;background:#ebebeb"></div>
<div class="a" style="left:1055px;top:426px;width:1px;height:20px;background:#ebebeb"></div>
<svg class="ic" style="left:387px;top:430px" width="10" height="10"><use href="#gear"/></svg>
<svg class="ic" style="left:402px;top:428px" width="16" height="13"><use href="#cart"/></svg>
<svg class="ic" style="left:421px;top:428px" width="14" height="14"><use href="#iic"/></svg>
<div class="t" style="left:523px;top:425px;color:#000">15</div>
<div class="t" style="left:555px;top:425px;color:#000;letter-spacing:-0.32px">CH11585</div>
<div class="t" style="left:650px;top:425px;color:#000">8</div>
<div class="t" style="left:685px;top:425px;color:#000;letter-spacing:-0.32px">CH11585</div>
<div class="t" style="left:773px;top:425px;color:#000;letter-spacing:-0.38px">BOLT</div>
<div class="a" style="left:381px;top:465px;width:741px;height:1px;background:#ebebeb"></div>
<div class="a" style="left:460px;top:446px;width:1px;height:20px;background:#ebebeb"></div>
<div class="a" style="left:518px;top:446px;width:1px;height:20px;background:#ebebeb"></div>
<div class="a" style="left:551px;top:446px;width:1px;height:20px;background:#ebebeb"></div>
<div class="a" style="left:645px;top:446px;width:1px;height:20px;background:#ebebeb"></div>
<div class="a" style="left:681px;top:446px;width:1px;height:20px;background:#ebebeb"></div>
<div class="a" style="left:769px;top:446px;width:1px;height:20px;background:#ebebeb"></div>
<div class="a" style="left:935px;top:446px;width:1px;height:20px;background:#ebebeb"></div>
<div class="a" style="left:995px;top:446px;width:1px;height:20px;background:#ebebeb"></div>
<div class="a" style="left:1055px;top:446px;width:1px;height:20px;background:#ebebeb"></div>
<svg class="ic" style="left:387px;top:450px" width="10" height="10"><use href="#gear"/></svg>
<svg class="ic" style="left:402px;top:448px" width="16" height="13"><use href="#cart"/></svg>
<svg class="ic" style="left:421px;top:448px" width="14" height="14"><use href="#iic"/></svg>
<div class="t" style="left:523px;top:445px;color:#000">16</div>
<div class="t" style="left:555px;top:445px;color:#000;letter-spacing:-0.32px">CH10255</div>
<div class="t" style="left:650px;top:445px;color:#000">8</div>
<div class="t" style="left:685px;top:445px;color:#000;letter-spacing:-0.32px">CH10255</div>
<div class="t" style="left:773px;top:445px;color:#000;letter-spacing:-0.38px">WASHER</div>
<div class="a" style="left:381px;top:485px;width:741px;height:1px;background:#ebebeb"></div>
<div class="a" style="left:460px;top:466px;width:1px;height:20px;background:#ebebeb"></div>
<div class="a" style="left:518px;top:466px;width:1px;height:20px;background:#ebebeb"></div>
<div class="a" style="left:551px;top:466px;width:1px;height:20px;background:#ebebeb"></div>
<div class="a" style="left:645px;top:466px;width:1px;height:20px;background:#ebebeb"></div>
<div class="a" style="left:681px;top:466px;width:1px;height:20px;background:#ebebeb"></div>
<div class="a" style="left:769px;top:466px;width:1px;height:20px;background:#ebebeb"></div>
<div class="a" style="left:935px;top:466px;width:1px;height:20px;background:#ebebeb"></div>
<div class="a" style="left:995px;top:466px;width:1px;height:20px;background:#ebebeb"></div>
<div class="a" style="left:1055px;top:466px;width:1px;height:20px;background:#ebebeb"></div>
<svg class="ic" style="left:387px;top:470px" width="10" height="10"><use href="#gear"/></svg>
<svg class="ic" style="left:402px;top:468px" width="16" height="13"><use href="#cart"/></svg>
<svg class="ic" style="left:421px;top:468px" width="14" height="14"><use href="#sic"/></svg>
<svg class="ic" style="left:439px;top:468px" width="14" height="14"><use href="#iic"/></svg>
<svg class="ic" style="left:467px;top:470px" width="10" height="10"><use href="#xic"/></svg>
<svg class="ic" style="left:481px;top:468px" width="16" height="14"><use href="#book"/></svg>
<div class="t" style="left:523px;top:465px;color:#000">16</div>
<div class="t" style="left:555px;top:465px;color:#000;letter-spacing:-0.32px">CH10541</div>
<div class="t" style="left:650px;top:465px;color:#000">8</div>
<div class="t" style="left:685px;top:465px;color:#000;letter-spacing:-0.32px">CH10255</div>
<div class="t" style="left:773px;top:465px;color:#000;letter-spacing:-0.38px">WASHER</div>
<div class="a" style="left:381px;top:505px;width:741px;height:1px;background:#ebebeb"></div>
<div class="a" style="left:460px;top:486px;width:1px;height:20px;background:#ebebeb"></div>
<div class="a" style="left:518px;top:486px;width:1px;height:20px;background:#ebebeb"></div>
<div class="a" style="left:551px;top:486px;width:1px;height:20px;background:#ebebeb"></div>
<div class="a" style="left:645px;top:486px;width:1px;height:20px;background:#ebebeb"></div>
<div class="a" style="left:681px;top:486px;width:1px;height:20px;background:#ebebeb"></div>
<div class="a" style="left:769px;top:486px;width:1px;height:20px;background:#ebebeb"></div>
<div class="a" style="left:935px;top:486px;width:1px;height:20px;background:#ebebeb"></div>
<div class="a" style="left:995px;top:486px;width:1px;height:20px;background:#ebebeb"></div>
<div class="a" style="left:1055px;top:486px;width:1px;height:20px;background:#ebebeb"></div>
<svg class="ic" style="left:387px;top:490px" width="10" height="10"><use href="#gear"/></svg>
<svg class="ic" style="left:402px;top:488px" width="16" height="13"><use href="#cart"/></svg>
<svg class="ic" style="left:421px;top:488px" width="14" height="14"><use href="#iic"/></svg>
<div class="t" style="left:523px;top:485px;color:#000">17</div>
<div class="t" style="left:555px;top:485px;color:#000;letter-spacing:-0.32px">CH11586</div>
<div class="t" style="left:650px;top:485px;color:#000">7</div>
<div class="t" style="left:685px;top:485px;color:#000;letter-spacing:-0.32px">CH11586</div>
<div class="t" style="left:773px;top:485px;color:#000;letter-spacing:-0.38px">BOLT</div>
<div class="a" style="left:381px;top:525px;width:741px;height:1px;background:#ebebeb"></div>
<div class="a" style="left:460px;top:506px;width:1px;height:20px;background:#ebebeb"></div>
<div class="a" style="left:518px;top:506px;width:1px;height:20px;background:#ebebeb"></div>
<div class="a" style="left:551px;top:506px;width:1px;height:20px;background:#ebebeb"></div>
<div class="a" style="left:645px;top:506px;width:1px;height:20px;background:#ebebeb"></div>
<div class="a" style="left:681px;top:506px;width:1px;height:20px;background:#ebebeb"></div>
<div class="a" style="left:769px;top:506px;width:1px;height:20px;background:#ebebeb"></div>
<div class="a" style="left:935px;top:506px;width:1px;height:20px;background:#ebebeb"></div>
<div class="a" style="left:995px;top:506px;width:1px;height:20px;background:#ebebeb"></div>
<div class="a" style="left:1055px;top:506px;width:1px;height:20px;background:#ebebeb"></div>
<svg class="ic" style="left:387px;top:510px" width="10" height="10"><use href="#gear"/></svg>
<svg class="ic" style="left:402px;top:508px" width="16" height="13"><use href="#cart"/></svg>
<svg class="ic" style="left:421px;top:508px" width="14" height="14"><use href="#iic"/></svg>
<div class="t" style="left:523px;top:505px;color:#000">18</div>
<div class="t" style="left:555px;top:505px;color:#000;letter-spacing:-0.32px">CH10255</div>
<div class="t" style="left:650px;top:505px;color:#000">7</div>
<div class="t" style="left:685px;top:505px;color:#000;letter-spacing:-0.32px">CH10255</div>
<div class="t" style="left:773px;top:505px;color:#000;letter-spacing:-0.38px">WASHER</div>
<div class="a" style="left:381px;top:545px;width:741px;height:1px;background:#ebebeb"></div>
<div class="a" style="left:460px;top:526px;width:1px;height:20px;background:#ebebeb"></div>
<div class="a" style="left:518px;top:526px;width:1px;height:20px;background:#ebebeb"></div>
<div class="a" style="left:551px;top:526px;width:1px;height:20px;background:#ebebeb"></div>
<div class="a" style="left:645px;top:526px;width:1px;height:20px;background:#ebebeb"></div>
<div class="a" style="left:681px;top:526px;width:1px;height:20px;background:#ebebeb"></div>
<div class="a" style="left:769px;top:526px;width:1px;height:20px;background:#ebebeb"></div>
<div class="a" style="left:935px;top:526px;width:1px;height:20px;background:#ebebeb"></div>
<div class="a" style="left:995px;top:526px;width:1px;height:20px;background:#ebebeb"></div>
<div class="a" style="left:1055px;top:526px;width:1px;height:20px;background:#ebebeb"></div>
<svg class="ic" style="left:387px;top:530px" width="10" height="10"><use href="#gear"/></svg>
<svg class="ic" style="left:402px;top:528px" width="16" height="13"><use href="#cart"/></svg>
<svg class="ic" style="left:421px;top:528px" width="14" height="14"><use href="#sic"/></svg>
<svg class="ic" style="left:439px;top:528px" width="14" height="14"><use href="#iic"/></svg>
<svg class="ic" style="left:467px;top:530px" width="10" height="10"><use href="#xic"/></svg>
<svg class="ic" style="left:481px;top:528px" width="16" height="14"><use href="#book"/></svg>
<div class="t" style="left:523px;top:525px;color:#000">18</div>
<div class="t" style="left:555px;top:525px;color:#000;letter-spacing:-0.32px">CH10541</div>
<div class="t" style="left:650px;top:525px;color:#000">7</div>
<div class="t" style="left:685px;top:525px;color:#000;letter-spacing:-0.32px">CH10255</div>
<div class="t" style="left:773px;top:525px;color:#000;letter-spacing:-0.38px">WASHER</div>
<div class="a" style="left:381px;top:565px;width:741px;height:1px;background:#ebebeb"></div>
<div class="a" style="left:460px;top:546px;width:1px;height:20px;background:#ebebeb"></div>
<div class="a" style="left:518px;top:546px;width:1px;height:20px;background:#ebebeb"></div>
<div class="a" style="left:551px;top:546px;width:1px;height:20px;background:#ebebeb"></div>
<div class="a" style="left:645px;top:546px;width:1px;height:20px;background:#ebebeb"></div>
<div class="a" style="left:681px;top:546px;width:1px;height:20px;background:#ebebeb"></div>
<div class="a" style="left:769px;top:546px;width:1px;height:20px;background:#ebebeb"></div>
<div class="a" style="left:935px;top:546px;width:1px;height:20px;background:#ebebeb"></div>
<div class="a" style="left:995px;top:546px;width:1px;height:20px;background:#ebebeb"></div>
<div class="a" style="left:1055px;top:546px;width:1px;height:20px;background:#ebebeb"></div>
<svg class="ic" style="left:387px;top:550px" width="10" height="10"><use href="#gear"/></svg>
<svg class="ic" style="left:402px;top:548px" width="16" height="13"><use href="#cart"/></svg>
<svg class="ic" style="left:421px;top:548px" width="14" height="14"><use href="#iic"/></svg>
<div class="t" style="left:523px;top:545px;color:#000">19</div>
<div class="t" style="left:555px;top:545px;color:#000;letter-spacing:-0.32px">CH11588</div>
<div class="t" style="left:650px;top:545px;color:#000">1</div>
<div class="t" style="left:685px;top:545px;color:#000;letter-spacing:-0.32px">CH11588</div>
<div class="t" style="left:773px;top:545px;color:#000;letter-spacing:-0.38px">PLUG</div>
<div class="a" style="left:381px;top:585px;width:741px;height:1px;background:#ebebeb"></div>
<div class="a" style="left:460px;top:566px;width:1px;height:20px;background:#ebebeb"></div>
<div class="a" style="left:518px;top:566px;width:1px;height:20px;background:#ebebeb"></div>
<div class="a" style="left:551px;top:566px;width:1px;height:20px;background:#ebebeb"></div>
<div class="a" style="left:645px;top:566px;width:1px;height:20px;background:#ebebeb"></div>
<div class="a" style="left:681px;top:566px;width:1px;height:20px;background:#ebebeb"></div>
<div class="a" style="left:769px;top:566px;width:1px;height:20px;background:#ebebeb"></div>
<div class="a" style="left:935px;top:566px;width:1px;height:20px;background:#ebebeb"></div>
<div class="a" style="left:995px;top:566px;width:1px;height:20px;background:#ebebeb"></div>
<div class="a" style="left:1055px;top:566px;width:1px;height:20px;background:#ebebeb"></div>
<svg class="ic" style="left:387px;top:570px" width="10" height="10"><use href="#gear"/></svg>
<svg class="ic" style="left:402px;top:568px" width="16" height="13"><use href="#cart"/></svg>
<svg class="ic" style="left:421px;top:568px" width="14" height="14"><use href="#iic"/></svg>
<div class="t" style="left:523px;top:565px;color:#000">20</div>
<div class="t" style="left:555px;top:565px;color:#000;letter-spacing:-0.32px">CH10220</div>
<div class="t" style="left:650px;top:565px;color:#000">1</div>
<div class="t" style="left:685px;top:565px;color:#000;letter-spacing:-0.32px">CH10220</div>
<div class="t" style="left:773px;top:565px;color:#000;letter-spacing:-0.38px">PLUG</div>
</body></html>
